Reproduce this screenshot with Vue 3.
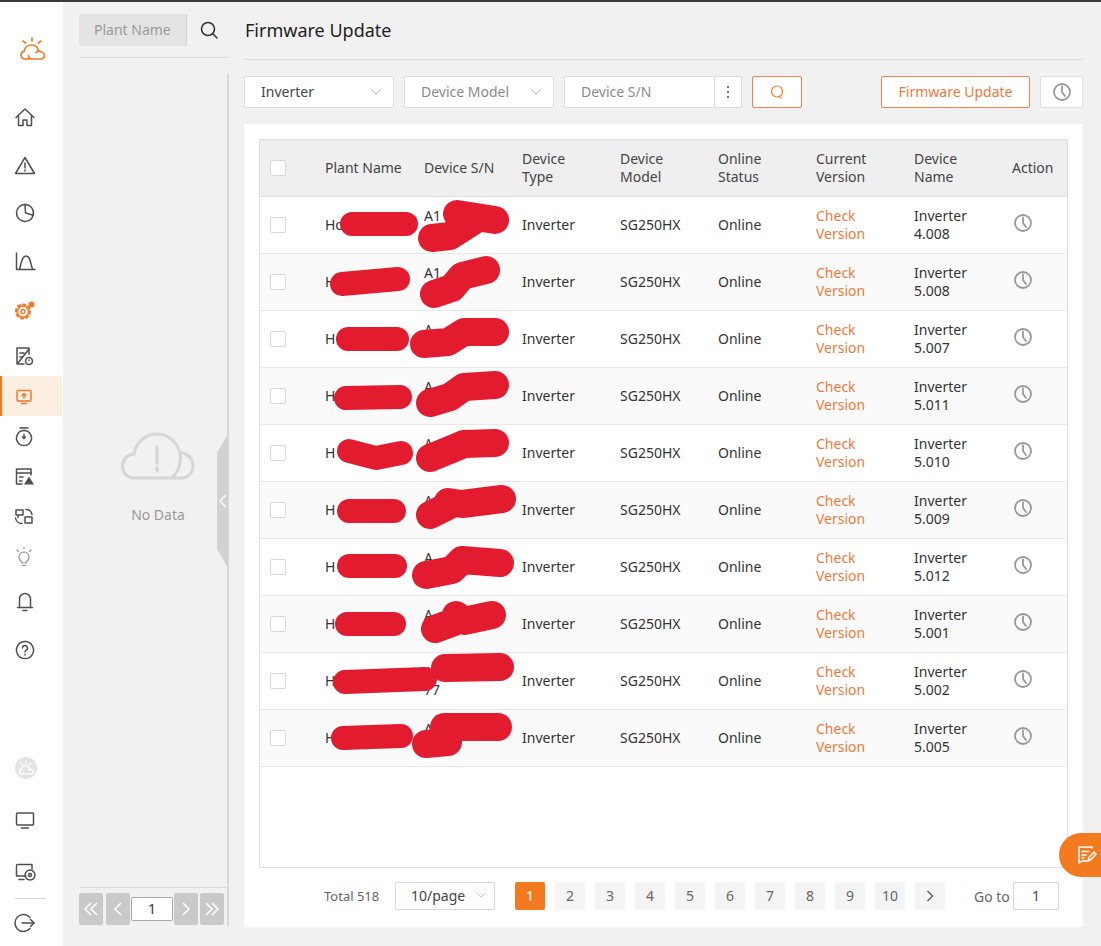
<script setup>
const topNav = [
  { d: ['M3 12.5 12 4l9 8.5', 'M5.5 10.5V20.5H10V15h4v5.5h4.5V10.5'] },
  { d: ['M12 4.5 21.5 20.5H2.5Z', 'M12 10v5', 'M12 17v1'] },
  { d: ['M12 3.5a8.5 8.5 0 1 0 8.2 10.8', 'M12 3.5a8.5 8.5 0 0 1 8.2 10.8L12.5 12Z'] },
  { d: ['M3.5 4V20.5H22', 'M6.5 20C8.5 15 8.5 7 13 7s4.500 8 6.500 13'] },
]
const midNav = [
  { d: ['M17 10V4H5v16h7', 'M8 9h4', 'M8 13h2', 'M6 19 17 5', 'M17 13.500a3.500 3.500 0 1 0 .01 0', 'M17 16v.5'] },
  { active: true, orange: true, d: ['M6 6.500h12a1 1 0 0 1 1 1V16a1 1 0 0 1-1 1H6a1 1 0 0 1-1-1V7.500a1 1 0 0 1 1-1Z', 'M12 14V10', 'M10 11.500 12 9.500l2 2', 'M9.500 19.500h5'] },
  { d: ['M8 4h8', 'M12 6.500a7.500 7.500 0 1 0 .01 0', 'M12 10.500v4', 'M10.500 13l1.500 1.500 1.500-1.500'] },
  { d: ['M19 11V5H4.500v15H10', 'M4.500 9H19', 'M7.500 13H11', 'M7.500 17H10'], fill: 'M17 12.500 22 20.500H12Z' },
  { d: ['M4 6h7v5H4Z', 'M13 13h7v6h-7Z', 'M14 5.500c3 0 5.500 2 6 5', 'M3.500 14c.5 3 3 5.500 6.500 5.500', 'M6 13.500v-2'] },
  { light: true, d: ['M12 8a5 5 0 0 0-3 9c.8.6 1 1.200 1 2h4c0-.8.2-1.400 1-2a5 5 0 0 0-3-9Z', 'M10.500 21.500h3', 'M12 3v2', 'M5 6l1.500 1.500', 'M19 6l-1.500 1.500'] },
]
const bellNav = { d: ['M6.500 18.500V10a5.500 5.500 0 0 1 11 0v8.500', 'M4.500 18.500h15', 'M10 21.500h4'] }
const helpNav = { d: ['M12 3.500a8.500 8.500 0 1 0 .01 0', 'M9.500 10a2.500 2.500 0 1 1 3.700 2.200c-.8.4-1.200 1-1.200 1.800', 'M12 16.300v.7'] }

const columns = [
  'Plant Name',
  'Device S/N',
  'Device Type',
  'Device Model',
  'Online Status',
  'Current Version',
  'Device Name',
  'Action',
]
const rows = [
  { plant: 'Ho', sn: 'A1', name: '4.008' },
  { plant: 'H', sn: 'A1', name: '5.008' },
  { plant: 'H', sn: 'A', name: '5.007' },
  { plant: 'H', sn: 'A', name: '5.011' },
  { plant: 'H', sn: 'A', name: '5.010' },
  { plant: 'H', sn: 'A', name: '5.009' },
  { plant: 'H', sn: 'A', name: '5.012' },
  { plant: 'H', sn: 'A', name: '5.001' },
  { plant: 'H', sn: 'A', tail: '77', name: '5.002' },
  { plant: 'H', sn: 'A', name: '5.005' },
]
// 手繪塗抹的遮罩（每列兩筆：名稱、序號）
const scribbles = [
  'M352 224H406',
  'M432 238 450 236 472 222M457 214 495 220',
  'M342 284 398 279',
  'M434 294 452 288 462 276 486 270',
  'M348 339H397',
  'M424 344 448 342 464 332 495 332',
  'M346 398 400 397',
  'M430 403 450 397 464 387 495 385',
  'M349 451 376 458 401 453',
  'M430 458 452 449 464 444 495 443',
  'M349 511H394',
  'M430 515 448 506 448 502 462 504 502 499',
  'M349 566H395',
  'M426 575 452 570 462 560 500 563',
  'M347 624H394',
  'M435 629 454 622 456 615 464 621 492 615',
  'M345 682 425 679',
  'M445 668 500 667',
  'M343 738 401 736',
  'M426 744 448 742 444 727 498 727',
]
const pages = [1, 2, 3, 4, 5, 6, 7, 8, 9, 10]
</script>

<template>
  <div class="page">
    <aside class="side">
      <div class="logo">
        <svg width="26" height="24" viewBox="0 0 26 24" fill="none" stroke="#f07a2a" stroke-width="1.700" stroke-linecap="round" stroke-linejoin="round">
          <path d="M13 1v3M4 4l2.500 2M22 4l-2.500 2" />
          <path d="M8 22H6a4 4 0 0 1-.8-7.900C6 10.500 9 8 12.500 8s6 2 7 5.500" />
          <path d="M8 22h14a3.500 3.500 0 0 0 0-7 3.500 3.500 0 0 0-5 .5 M9.500 18.500c0 2 1.500 3.500 3.500 3.500" />
        </svg>
      </div>

      <div v-for="(item, i) in topNav" :key="i" class="nav nav--tall">
        <svg class="ico" viewBox="0 0 24 24"><path v-for="d in item.d" :key="d" :d="d" /></svg>
      </div>
      <div class="nav nav--tall">
        <svg class="ico ico--orange" viewBox="0 0 24 24">
          <path d="M10 9a5.500 5.500 0 1 0 .01 0" />
          <path d="M10 12.500a2 2 0 1 0 .01 0" />
          <circle cx="10" cy="14.500" r="7" stroke-width="2.200" stroke-dasharray="2.200 3.300" />
          <circle class="solid" cx="18.500" cy="7.500" r="3" />
        </svg>
      </div>

      <div class="mid">
        <div v-for="(item, i) in midNav" :key="i" class="nav nav--mid" :class="{ 'is-active': item.active }">
          <svg class="ico" :class="{ 'ico--orange': item.orange, 'ico--light': item.light }" viewBox="0 0 24 24">
            <path v-for="d in item.d" :key="d" :d="d" />
            <path v-if="item.fill" class="solid" :d="item.fill" />
          </svg>
        </div>
      </div>
      <div class="nav nav--bell">
        <svg class="ico" viewBox="0 0 24 24"><path v-for="d in bellNav.d" :key="d" :d="d" /></svg>
      </div>
      <div class="nav nav--tall nav--help">
        <svg class="ico" viewBox="0 0 24 24"><path v-for="d in helpNav.d" :key="d" :d="d" /></svg>
      </div>

      <div class="side-bottom">
        <div class="nav nav--low">
          <span class="avatar">
            <svg width="16" height="14" viewBox="0 0 26 24" fill="none" stroke="#fff" stroke-width="2.400" stroke-linecap="round">
              <path d="M13 1v3M4 4l2.500 2M22 4l-2.500 2" />
              <path d="M8 22H6a4 4 0 0 1-.8-7.900C6 10.500 9 8 12.500 8s6 2 7 5.500" />
              <path d="M8 22h14a3.500 3.500 0 0 0 0-7 3.500 3.500 0 0 0-5 .5" />
            </svg>
          </span>
        </div>
        <div class="nav nav--low">
          <svg class="ico" viewBox="0 0 24 24"><path d="M4.500 5h15a1 1 0 0 1 1 1v10a1 1 0 0 1-1 1h-15a1 1 0 0 1-1-1V6a1 1 0 0 1 1-1Z" /><path d="M8.500 20h7" /></svg>
        </div>
        <div class="nav nav--low">
          <svg class="ico" viewBox="0 0 24 24"><path d="M13 16H3.500V5.500a1 1 0 0 1 1-1H19V9" /><path d="M6 19.500h5" /><path d="M17 10a5 5 0 1 0 .01 0" /><path d="M17 13.500a1.500 1.500 0 1 0 .01 0" /></svg>
        </div>
        <div class="nav nav--exit">
          <svg class="ico" viewBox="0 0 24 24"><path d="M17 6.500a8.500 8.500 0 1 0 0 11" /><path d="M9 12h12" /><path d="M17.500 8.500 21 12l-3.500 3.500" /></svg>
        </div>
      </div>
    </aside>

    <section class="tree">
      <div class="tree__search">
        <div class="tree__input">Plant Name</div>
        <svg class="tree__lens" width="20" height="20" viewBox="0 0 20 20" fill="none" stroke="#333" stroke-width="1.500" stroke-linecap="round">
          <circle cx="9" cy="9" r="6.500" />
          <path d="M14 14l4 4" />
        </svg>
      </div>
      <div class="tree__body">
        <div class="empty">
          <svg width="74" height="48" viewBox="0 0 74 48" fill="none" stroke="#d6d6d6" stroke-width="3">
            <path d="M50 46H14A12 12 0 0 1 13 22C15 10 25 2 36 2s21 8 23 20c1 3 1 5 0 9-1 7-5 12-9 15Z" />
            <path d="M59 20.500C66 21 72 26 72 34c0 7-5 12-12 12H50" />
            <path d="M36 15v16M36 36v3" stroke-linecap="round" stroke-width="3.500" />
          </svg>
          <span class="empty__text">No Data</span>
        </div>
        <div class="tree__pager">
          <button class="pg-btn" type="button">
            <svg width="16" height="16" viewBox="0 0 16 16"><path d="M8 2 2 8l6 6M14 2 8 8l6 6" /></svg>
          </button>
          <button class="pg-btn" type="button">
            <svg width="16" height="16" viewBox="0 0 16 16"><path d="M11 2 5 8l6 6" /></svg>
          </button>
          <div class="pg-input">1</div>
          <button class="pg-btn" type="button">
            <svg width="16" height="16" viewBox="0 0 16 16"><path d="M5 2l6 6-6 6" /></svg>
          </button>
          <button class="pg-btn pg-btn--last" type="button">
            <svg width="16" height="16" viewBox="0 0 16 16"><path d="M2 2l6 6-6 6M8 2l6 6-6 6" /></svg>
          </button>
        </div>
        <div class="tree__fold">
          <svg width="8" height="14" viewBox="0 0 8 14" fill="none" stroke="#fff" stroke-width="1.300"><path d="M7 1 1 7l6 6" /></svg>
        </div>
      </div>
    </section>

    <main class="main">
      <h1 class="title">Firmware Update</h1>

      <div class="toolbar">
        <div class="field field--select is-filled">
          Inverter
          <svg class="caret" width="12" height="8" viewBox="0 0 12 8"><path d="M1 1l5 5 5-5" /></svg>
        </div>
        <div class="field field--select">
          Device Model
          <svg class="caret" width="12" height="8" viewBox="0 0 12 8"><path d="M1 1l5 5 5-5" /></svg>
        </div>
        <div class="sn-group">
          <div class="field field--sn">Device S/N</div>
          <div class="field field--more"><i></i><i></i><i></i></div>
        </div>
        <button class="btn-lens" type="button">
          <svg width="16" height="16" viewBox="0 0 16 16" fill="none" stroke="#f07a2a" stroke-width="1.200" stroke-linecap="round"><circle cx="8" cy="7.500" r="5.500" /><path d="M10.500 12.500l1.500 1.500" /></svg>
        </button>
        <button class="btn-update" type="button">Firmware Update</button>
        <button class="btn-history" type="button">
          <svg class="clock" viewBox="0 0 20 20"><circle cx="10" cy="10" r="8" /><path d="M10 4.500V10l3 4" /></svg>
        </button>
      </div>

      <div class="card">
        <div class="table-wrap">
          <table class="grid">
            <colgroup>
              <col style="width: 55px" />
              <col style="width: 99px" />
              <col v-for="n in 5" :key="n" style="width: 98px" />
              <col style="width: 98px" />
              <col style="width: 65px" />
            </colgroup>
            <thead>
              <tr>
                <th><span class="check"></span></th>
                <th v-for="(c, i) in columns" :key="c" :class="{ 'no-wrap': i < 2 || i === 7 }">{{ c }}</th>
              </tr>
            </thead>
            <tbody>
              <tr v-for="(r, i) in rows" :key="i" :class="{ 'is-odd': i % 2 === 1 }">
                <td><span class="check"></span></td>
                <td>{{ r.plant }}</td>
                <td class="cell-sn">{{ r.sn }}<br />{{ r.tail || '&nbsp;' }}</td>
                <td>Inverter</td>
                <td>SG250HX</td>
                <td>Online</td>
                <td class="cell-link">Check Version</td>
                <td>Inverter {{ r.name }}</td>
                <td>
                  <svg class="clock clock--row" viewBox="0 0 20 20"><circle cx="10" cy="10" r="8" /><path d="M10 4.500V10l3 4" /></svg>
                </td>
              </tr>
            </tbody>
          </table>
          <svg class="scribble" width="809" height="729">
            <g transform="translate(-260 -140)">
              <path v-for="(d, i) in scribbles" :key="d" :d="d" :class="{ thick: i % 2 === 1 }" />
            </g>
          </svg>
        </div>

        <div class="pagination">
          <span class="pagination__total">Total 518</span>
          <div class="pagination__size">
            10/page
            <svg class="caret" width="10" height="7" viewBox="0 0 12 8"><path d="M1 1l5 5 5-5" /></svg>
          </div>
          <ul class="pagination__list">
            <li v-for="p in pages" :key="p" :class="{ 'is-active': p === 1 }">{{ p }}</li>
            <li>
              <svg width="8" height="12" viewBox="0 0 8 12" fill="none" stroke="#555" stroke-width="1.300"><path d="M1.500 1l5 5-5 5" /></svg>
            </li>
          </ul>
          <span class="pagination__goto">Go to</span>
          <div class="pagination__jump">1</div>
        </div>
      </div>
    </main>

    <div class="float-btn">
      <svg width="20" height="20" viewBox="0 0 20 20" fill="none" stroke="#fff" stroke-width="1.500" stroke-linecap="round" stroke-linejoin="round">
        <path d="M15 3V2H2v16l3-2h5" />
        <path d="M5 6.500h7M5 10h4M5 13h2" />
        <path d="M11 16l1-3.500 5-5.500 2 2-5 5.500Z" />
      </svg>
    </div>
  </div>
</template>

<style>
html,
body {
  margin: 0;
  overflow: hidden;
}
</style>

<style scoped>
.page {
  position: relative;
  display: flex;
  width: 1101px;
  height: 946px;
  box-sizing: border-box;
  border-top: 2px solid #3a3a3a;
  background: #f1f1f1;
  font-family: "Noto Sans", "Open Sans", sans-serif;
  font-size: 14px;
  color: #333;
  overflow: hidden;
}

/* 側邊欄 */
.side {
  flex: 0 0 63px;
  display: flex;
  flex-direction: column;
  background: #fff;
}
.logo {
  height: 91px;
  display: flex;
  align-items: center;
  justify-content: center;
  padding-top: 2px;
  box-sizing: border-box;
}
.nav {
  height: 40px;
  display: flex;
  align-items: center;
  padding-left: 13px;
  box-sizing: border-box;
}
.nav--tall {
  height: 48px;
}
.nav--mid {
  padding-left: 12px;
}
.mid {
  margin-top: 3px;
}
.nav.is-active {
  padding-left: 10px;
  width: 62px;
  border-left: 2px solid #f47a20;
  background: #fdeee2;
}
.nav--bell {
  margin-top: 5px;
}
.nav--help {
  margin-top: 5px;
}
.ico {
  width: 24px;
  height: 24px;
  fill: none;
  stroke: #4f4f4f;
  stroke-width: 1.500;
  stroke-linecap: round;
  stroke-linejoin: round;
}
.ico .solid {
  fill: #4f4f4f;
  stroke: none;
}
.ico--orange {
  stroke: #f07a2a;
}
.ico--orange .solid {
  fill: #f07a2a;
}
.ico--light {
  stroke: #8f8f8f;
  stroke-width: 1.100;
}
.side-bottom {
  margin-top: auto;
}
.nav--low {
  height: 52px;
}
.nav--exit {
  height: 48px;
  margin: 0 17px 0 15px;
  padding-left: 0;
  padding-right: 0;
  border-top: 1px solid #d8d8d8;
}
.nav--exit .ico {
  margin-left: -2px;
}
.avatar {
  width: 22px;
  height: 22px;
  margin-left: 2px;
  border-radius: 50%;
  background: #e4e4e4;
  display: flex;
  align-items: center;
  justify-content: center;
}

/* 電站樹 */
.tree {
  flex: 0 0 181px;
  display: flex;
  flex-direction: column;
  box-sizing: border-box;
  padding-left: 16px;
}
.tree__search {
  width: 150px;
  height: 44px;
  margin-top: 12px;
  display: flex;
  align-items: flex-start;
  box-sizing: border-box;
  border-bottom: 1px solid #dcdcdc;
}
.tree__input {
  width: 108px;
  height: 32px;
  line-height: 32px;
  box-sizing: border-box;
  padding-left: 15px;
  background: #e4e4e4;
  border-right: 1px solid #d4d4d4;
  border-radius: 2px 0 0 2px;
  color: #999;
}
.tree__lens {
  margin: 6px 0 0 12px;
}
.tree__body {
  position: relative;
  width: 150px;
  flex: 1;
  margin-top: 16px;
  margin-bottom: 20px;
  display: flex;
  flex-direction: column;
  box-sizing: border-box;
  border-right: 2px solid #d9d9d9;
}
.empty {
  flex: 1;
  display: flex;
  flex-direction: column;
  align-items: center;
  padding: 358px 0 0 10px;
  box-sizing: border-box;
}
.empty__text {
  margin-top: 25px;
  color: #999;
}
.tree__pager {
  display: flex;
  align-items: center;
  height: 39px;
  width: 147px;
  box-sizing: border-box;
  border-top: 1px solid #d9d9d9;
  padding-top: 4px;
  gap: 3px;
}
.pg-btn {
  width: 24px;
  height: 32px;
  padding: 0;
  display: flex;
  align-items: center;
  justify-content: center;
  border: none;
  border-radius: 2px;
  background: #c9c9c9;
}
.pg-btn--last {
  margin-left: -1px;
}
.pg-btn svg {
  fill: none;
  stroke: #fff;
  stroke-width: 1.600;
}
.pg-input {
  width: 42px;
  height: 24px;
  margin: 0 -2px;
  line-height: 22px;
  box-sizing: border-box;
  text-align: center;
  background: #fff;
  border: 1px solid #aaa;
  border-radius: 2px;
}
.tree__fold {
  position: absolute;
  right: -1px;
  top: 360px;
  width: 11px;
  height: 134px;
  display: flex;
  align-items: center;
  justify-content: center;
  background: #d2d2d2;
  clip-path: polygon(100% 0, 100% 100%, 0 86%, 0 14%);
}

/* 主區域 */
.main {
  flex: 1;
  display: flex;
  flex-direction: column;
  padding-right: 18px;
  min-width: 0;
}
.title {
  margin: 0;
  height: 58px;
  box-sizing: border-box;
  padding: 14px 0 0 1px;
  border-bottom: 1px solid #dcdcdc;
  font-size: 18px;
  font-weight: 400;
  line-height: 28px;
  color: #222;
}
.toolbar {
  display: flex;
  align-items: center;
  gap: 10px;
  margin-top: 16px;
}
.field {
  height: 32px;
  box-sizing: border-box;
  background: #fff;
  border: 1px solid #dcdcdc;
  border-radius: 2px;
  color: #8a8a8a;
  line-height: 30px;
}
.field--select {
  position: relative;
  width: 150px;
  padding-left: 16px;
}
.is-filled {
  color: #444;
}
.caret {
  position: absolute;
  right: 11px;
  top: 11px;
  fill: none;
  stroke: #b5b5b5;
  stroke-width: 1;
}
.sn-group {
  display: flex;
}
.field--sn {
  width: 151px;
  padding-left: 16px;
}
.field--more {
  width: 28px;
  display: flex;
  flex-direction: column;
  align-items: center;
  justify-content: center;
  gap: 3px;
  margin-left: -1px;
}
.field--more i {
  width: 2px;
  height: 2px;
  background: #777;
}
.btn-lens {
  width: 50px;
  height: 32px;
  padding: 0;
  display: flex;
  align-items: center;
  justify-content: center;
  background: #fff;
  border: 1px solid #ef8444;
  border-radius: 2px;
}
.btn-update {
  width: 149px;
  height: 32px;
  margin-left: 69px;
  padding: 0 0 2px;
  background: #fff;
  border: 1px solid #ef8444;
  border-radius: 2px;
  color: #ec7a3a;
  font: inherit;
}
.btn-history {
  width: 43px;
  height: 32px;
  padding: 0;
  display: flex;
  align-items: center;
  justify-content: center;
  background: #fff;
  border: 1px solid #e0e0e0;
  border-radius: 2px;
}
.clock {
  width: 20px;
  height: 20px;
  fill: none;
  stroke: #999;
  stroke-width: 1.800;
  stroke-linecap: round;
}
.clock--row {
  display: block;
  margin: -4px 0 0 1px;
}
.card {
  flex: 1;
  display: flex;
  flex-direction: column;
  margin: 16px 0 19px;
  padding: 15px 15px 0;
  background: #fff;
}
.table-wrap {
  position: relative;
  height: 729px;
  box-sizing: border-box;
  border: 1px solid #dedede;
  width: 809px;
}
.grid {
  width: 807px;
  table-layout: fixed;
  border-collapse: collapse;
  line-height: 18px;
}
.grid th {
  height: 56px;
  padding: 0 25px 0 10px;
  background: #efefef;
  border-bottom: 1px solid #dedede;
  font-weight: 400;
  text-align: left;
  color: #444;
}
.grid th.no-wrap {
  padding-right: 0;
  white-space: nowrap;
}
.grid td {
  height: 56px;
  padding: 0 10px;
  border-bottom: 1px solid #e8e8e8;
  color: #333;
}
.grid tr.is-odd td {
  background: #fafafa;
}
.cell-link {
  color: #ec7a3a !important;
}
.check {
  display: block;
  width: 16px;
  height: 16px;
  box-sizing: border-box;
  background: #fff;
  border: 1px solid #d8d8d8;
  border-radius: 2px;
}
.scribble {
  position: absolute;
  left: 0;
  top: 0;
  overflow: visible;
  pointer-events: none;
}
.scribble path {
  fill: none;
  stroke: #e31b2f;
  stroke-width: 24;
  stroke-linecap: round;
  stroke-linejoin: round;
}
.scribble path.thick {
  stroke-width: 28;
}

/* 分頁 */
.pagination {
  display: flex;
  align-items: center;
  height: 28px;
  margin-top: 14px;
  padding-left: 65px;
  color: #666;
}
.pagination__total {
  width: 71px;
  font-size: 13px;
}
.pagination__size {
  position: relative;
  width: 100px;
  height: 28px;
  box-sizing: border-box;
  padding-left: 15px;
  line-height: 26px;
  color: #444;
  background: #fff;
  border: 1px solid #d8d8d8;
  border-radius: 2px;
}
.pagination__size .caret {
  top: 9px;
  right: 8px;
}
.pagination__list {
  display: flex;
  gap: 10px;
  list-style: none;
  margin: 0 0 0 20px;
  padding: 0;
}
.pagination__list li {
  width: 30px;
  height: 28px;
  line-height: 28px;
  display: flex;
  align-items: center;
  justify-content: center;
  background: #f4f4f5;
  border-radius: 2px;
  color: #666;
}
.pagination__list li.is-active {
  background: #f47a20;
  color: #fff;
}
.pagination__goto {
  margin-left: 29px;
  width: 39px;
}
.pagination__jump {
  width: 46px;
  height: 28px;
  box-sizing: border-box;
  line-height: 26px;
  text-align: center;
  border: 1px solid #d8d8d8;
  border-radius: 2px;
  color: #444;
}

.float-btn {
  position: absolute;
  right: 0;
  top: 831px;
  width: 42px;
  height: 44px;
  display: flex;
  align-items: center;
  justify-content: center;
  padding-left: 14px;
  box-sizing: border-box;
  background: #f47a20;
  border-radius: 22px 0 0 22px;
}
</style>
